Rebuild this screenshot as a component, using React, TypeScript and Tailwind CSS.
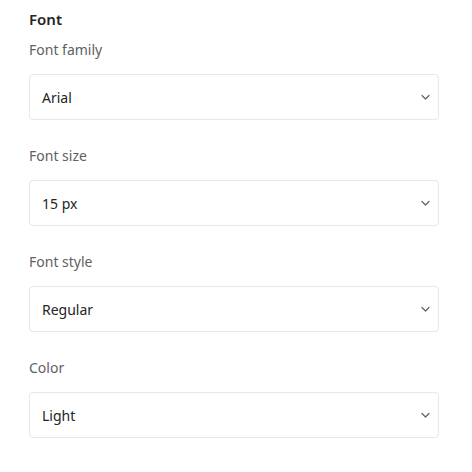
import React from "react";

const fields = [
  { label: "Font family", value: "Arial" },
  { label: "Font size", value: "15 px" },
  { label: "Font style", value: "Regular" },
  { label: "Color", value: "Light" },
];

function Chevron() {
  return (
    <svg width="9" height="6" viewBox="0 0 9 6" fill="none" className="text-[#616161]">
      <path d="M1 1.5l3.5 3.5 3.5-3.5" stroke="currentColor" strokeWidth="1.2" strokeLinecap="round" strokeLinejoin="round" />
    </svg>
  );
}

export default function App() {
  return (
    <div
      className="min-h-[472px] bg-white pl-[29px] pt-[9px]"
      style={{ fontFamily: '"Noto Sans", sans-serif' }}
    >
      <div className="text-[15px] leading-[20px] font-semibold text-[#242424]">Font</div>
      <div className="mt-[11px] flex flex-col gap-[26px]">
        {fields.map((f) => (
          <div key={f.label} className="flex flex-col">
            <div className="text-[14px] leading-[20px] text-[#616161]">{f.label}</div>
            <div className="mt-[14px] flex h-[46px] w-[410px] items-center justify-between rounded-[4px] border border-[#e8e8e8] pl-[12px] pr-[8px]">
              <span className="text-[14px] text-[#242424]">{f.value}</span>
              <Chevron />
            </div>
          </div>
        ))}
      </div>
    </div>
  );
}
